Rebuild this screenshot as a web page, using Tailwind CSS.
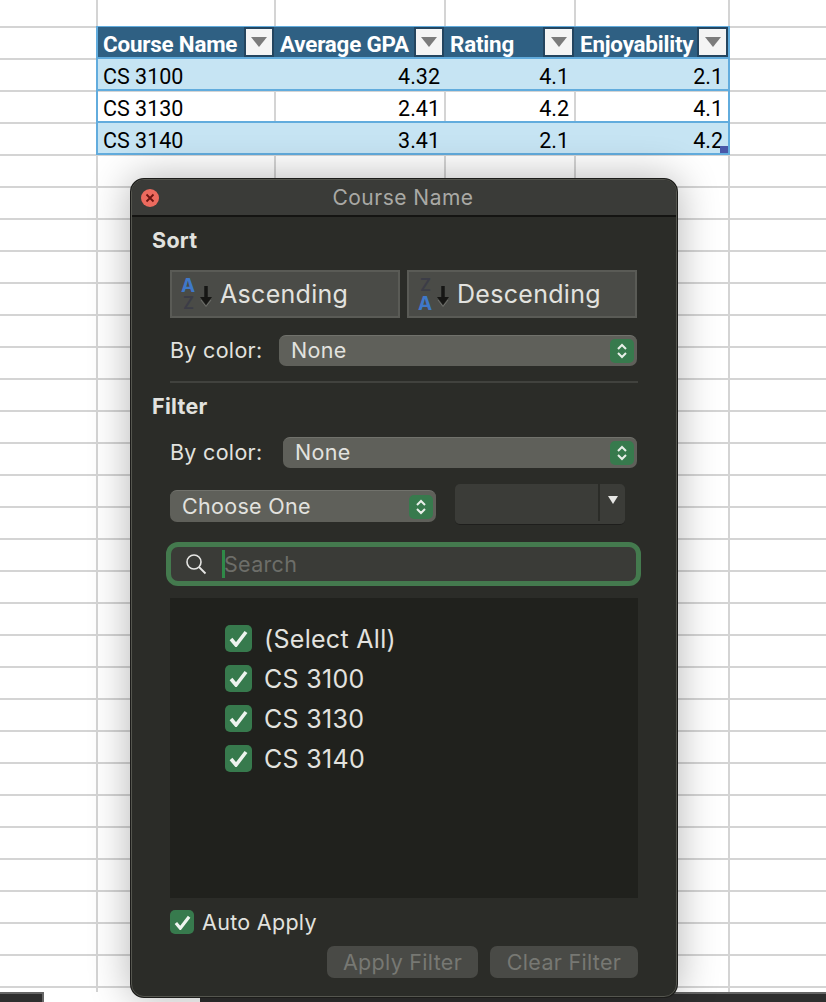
<!doctype html>
<html><head><meta charset="utf-8"><script src="https://cdn.jsdelivr.net/npm/@tailwindcss/browser@4"></script></head>
<body class="bg-white overflow-hidden">
<div class="relative w-[826px] h-[1002px] overflow-hidden font-['Inter',sans-serif]">
  <div class="h-[992px] pt-[26px] pl-[96px] bg-[linear-gradient(to_right,transparent_96px,#d4d4d4_96px,#d4d4d4_98px,transparent_98px,transparent_274px,#d4d4d4_274px,#d4d4d4_276px,transparent_276px,transparent_444px,#d4d4d4_444px,#d4d4d4_446px,transparent_446px,transparent_728px,#d4d4d4_728px,#d4d4d4_730px,transparent_730px),linear-gradient(to_right,transparent_574px,#d4d4d4_574px,#d4d4d4_576px,transparent_576px),repeating-linear-gradient(to_bottom,#d4d4d4_0,#d4d4d4_2px,transparent_2px,transparent_32px)] [background-position:0_0,0_0,0_26px] [background-size:100%_100%,100%_100%,100%_100%]">
    <div class="w-[634px] border-2 border-[#62acdd] text-black font-['Roboto',sans-serif] text-[21.5px]">
      <div class="flex h-[30px] bg-[#2f6083] text-white font-['Roboto',sans-serif] font-bold text-[22.4px] tracking-[-0.2px] -mt-px leading-[34px]">
        <div class="w-[176px] pl-[5px] flex justify-between"><span>Course Name</span><span class="w-[30px] h-[30px] border-2 border-[#24455f] bg-[#f4f4f4] flex items-center justify-center"><svg width="18" height="12" viewBox="0 0 18 12"><path d="M1 1h16l-8 10z" fill="#7b7b7b"/></svg></span></div>
        <div class="w-[170px] pl-[6px] flex justify-between"><span>Average GPA</span><span class="w-[30px] h-[30px] border-2 border-[#24455f] bg-[#f4f4f4] flex items-center justify-center"><svg width="18" height="12" viewBox="0 0 18 12"><path d="M1 1h16l-8 10z" fill="#7b7b7b"/></svg></span></div>
        <div class="w-[130px] pl-[6px] flex justify-between"><span>Rating</span><span class="w-[31px] h-[30px] border-2 border-[#24455f] bg-[#f4f4f4] flex items-center justify-center"><svg width="18" height="12" viewBox="0 0 18 12"><path d="M1 1h16l-8 10z" fill="#7b7b7b"/></svg></span></div>
        <div class="w-[154px] pl-[6px] flex justify-between"><span>Enjoyability</span><span class="w-[31px] h-[30px] border-2 border-[#24455f] bg-[#f4f4f4] flex items-center justify-center"><svg width="18" height="12" viewBox="0 0 18 12"><path d="M1 1h16l-8 10z" fill="#7b7b7b"/></svg></span></div>
      </div>
      <div class="flex h-[32px] leading-[35px] bg-[#c6e4f3] border-t-2 border-[#62acdd]">
        <div class="w-[176px] pl-[5px]">CS 3100</div><div class="w-[170px] text-right pr-[4px]">4.32</div><div class="w-[130px] text-right pr-[5px]">4.1</div><div class="w-[154px] text-right pr-[5px]">2.1</div>
      </div>
      <div class="flex h-[32px] leading-[35px] border-t-2 border-[#62acdd]">
        <div class="w-[176px] pl-[5px]">CS 3130</div><div class="w-[170px] text-right pr-[4px]">2.41</div><div class="w-[130px] text-right pr-[5px]">4.2</div><div class="w-[154px] text-right pr-[5px]">4.1</div>
      </div>
      <div class="relative flex h-[32px] leading-[35px] bg-[#c6e4f3] border-t-2 border-[#62acdd]">
        <div class="w-[176px] pl-[5px]">CS 3140</div><div class="w-[170px] text-right pr-[4px]">3.41</div><div class="w-[130px] text-right pr-[5px]">2.1</div><div class="w-[154px] text-right pr-[5px]">4.2</div>
        <div class="absolute right-0 bottom-0 w-[8px] h-[7px] bg-[#4a57a8]"></div>
      </div>
    </div>
  </div>
  <div class="flex h-[10px]">
    <div class="w-[44px] bg-[#2e2e2e] border-t-2 border-r-2 border-[#666]"></div>
    <div class="w-[156px] bg-white"></div>
    <div class="flex-1 bg-[#2e2e2e] border-t-2 border-[#666]"></div>
  </div>

  <div class="absolute left-[130px] top-[178px] w-[548px] h-[820px] rounded-[14px] bg-[#2b2c28] border-2 border-[#1c1c1a] outline outline-1 outline-[#55564f] -outline-offset-2 shadow-[0_0_40px_rgba(0,0,0,0.3)] text-[#e2e2df] text-[21.5px] tracking-[0.3px] overflow-hidden font-['Inter',sans-serif]">
    <div class="relative h-[37px] bg-[#3a3b38] border-b-2 border-[#141412] text-center text-[#a9a9a5] text-[21px] tracking-[0.5px] pr-[2px] leading-[35px]">
      <span class="absolute left-[9px] top-[9px] w-[18px] h-[18px] rounded-full bg-[#ec6a5e] flex items-center justify-center"><svg width="10" height="10" viewBox="0 0 10 10"><path d="M1.5 1.5l7 7M8.5 1.5l-7 7" stroke="#6b1410" stroke-width="1.8"/></svg></span>
      Course Name
    </div>
    <div class="pl-[20px] pt-[11px] font-bold text-[21.5px] leading-[24px]">Sort</div>
    <div class="flex gap-[7px] pl-[38px] mt-[18px]">
      <div class="w-[230px] h-[48px] bg-[#4a4b47] border-2 border-[#5a5b56] flex items-center pl-[9px] text-[25px] gap-[7px]">
        <svg class="shrink-0" width="34" height="44" viewBox="0 -3 34 44"><text x="0" y="17" font-family="Inter" font-weight="700" font-size="19" fill="#3f78c9">A</text><text x="2" y="34" font-family="Inter" font-weight="600" font-size="17" fill="#3c3d47">Z</text><path d="M25 11v13" stroke="#161614" stroke-width="3.5"/><path d="M19 22h12l-6 8z" fill="#161614"/><path d="M20 25l5 6.500 5-6.500" fill="none" stroke="#6f706b" stroke-width="1"/></svg>
        <span class="-ml-[2px] mt-[2px]">Ascending</span>
      </div>
      <div class="w-[230px] h-[48px] bg-[#4a4b47] border-2 border-[#5a5b56] flex items-center pl-[9px] text-[25px] gap-[7px]">
        <svg class="shrink-0" width="34" height="44" viewBox="0 -3 34 44"><text x="2" y="16" font-family="Inter" font-weight="600" font-size="17" fill="#3c3d47">Z</text><text x="0" y="35" font-family="Inter" font-weight="700" font-size="19" fill="#3f78c9">A</text><path d="M25 11v13" stroke="#161614" stroke-width="3.5"/><path d="M19 22h12l-6 8z" fill="#161614"/><path d="M20 25l5 6.500 5-6.500" fill="none" stroke="#6f706b" stroke-width="1"/></svg>
        <span class="-ml-[2px] mt-[2px]">Descending</span>
      </div>
    </div>
    <div class="flex items-center pl-[38px] mt-[17px] h-[31px] gap-[17px]">
      <span class="w-[92px] whitespace-nowrap">By color:</span>
      <div class="w-[358px] h-[31px] rounded-[7px] bg-[#5f605a] border-t border-[#71726c] pl-[12px] pr-[3px] flex items-center justify-between"><span class="pb-[2px]">None</span><span class="w-[24px] h-[24px] rounded-[5px] bg-[#377a4d] flex items-center justify-center"><svg width="12" height="18" viewBox="0 0 12 18"><path d="M2 7l4-4 4 4M2 11l4 4 4-4" fill="none" stroke="#e8efe9" stroke-width="2"/></svg></span></div>
    </div>
    <div class="ml-[38px] mr-[38px] mt-[15px] h-[2px] bg-[#41423e]"></div>
    <div class="pl-[20px] mt-[11px] font-bold text-[21.5px] leading-[24px]">Filter</div>
    <div class="flex items-center pl-[38px] mt-[19px] h-[31px] gap-[21px]">
      <span class="w-[92px] whitespace-nowrap">By color:</span>
      <div class="w-[354px] h-[31px] rounded-[7px] bg-[#5f605a] border-t border-[#71726c] pl-[12px] pr-[3px] flex items-center justify-between"><span class="pb-[2px]">None</span><span class="w-[24px] h-[24px] rounded-[5px] bg-[#377a4d] flex items-center justify-center"><svg width="12" height="18" viewBox="0 0 12 18"><path d="M2 7l4-4 4 4M2 11l4 4 4-4" fill="none" stroke="#e8efe9" stroke-width="2"/></svg></span></div>
    </div>
    <div class="flex items-center pl-[38px] mt-[16px] h-[41px] gap-[19px]">
      <div class="w-[266px] h-[32px] mt-[3px] rounded-[7px] bg-[#5f605a] border-t border-[#71726c] pl-[12px] pr-[3px] flex items-center justify-between"><span>Choose One</span><span class="w-[24px] h-[24px] rounded-[5px] bg-[#377a4d] flex items-center justify-center"><svg width="12" height="18" viewBox="0 0 12 18"><path d="M2 7l4-4 4 4M2 11l4 4 4-4" fill="none" stroke="#e8efe9" stroke-width="2"/></svg></span></div>
      <div class="w-[170px] h-[41px] rounded-[5px] bg-[#3b3c38] border-b border-[#1e1e1c] flex justify-end"><span class="w-[27px] h-[37px] border-l-2 border-[#2b2c28] flex items-center justify-center pb-[6px]"><svg width="10" height="8" viewBox="0 0 10 8"><path d="M0 0h10l-5 8z" fill="#e6e6e4"/></svg></span></div>
    </div>
    <div class="ml-[34px] mt-[17px] w-[475px] h-[44px] rounded-[12px] border-[5px] border-[#447a4e] bg-[#3a3b37] flex items-center pl-[14px]">
      <svg class="shrink-0" width="22" height="22" viewBox="0 0 22 22"><circle cx="9" cy="9" r="7" fill="none" stroke="#e6e6e4" stroke-width="1.6"/><path d="M14 14l6.500 6.500" stroke="#e6e6e4" stroke-width="1.8"/></svg>
      <span class="ml-[15px] w-[3px] h-[28px] bg-[#2f8a48] shrink-0"></span>
      <span class="-ml-[1px] text-[#6d6e69]">Search</span>
    </div>
    <div class="ml-[38px] mt-[12px] w-[468px] h-[300px] bg-[#20211d] pt-[27px] pl-[55px] flex flex-col gap-[13px] text-[25px]">
      <div class="flex items-center h-[27px] gap-[12px]"><span class="w-[27px] h-[27px] rounded-[5px] bg-[#377a4d] flex items-center justify-center"><svg width="19" height="17" viewBox="0 0 19 17"><path d="M2 9l5 6L17 2" fill="none" stroke="#eef4ef" stroke-width="3.6"/></svg></span><span class="mt-[2px]">(Select All)</span></div>
      <div class="flex items-center h-[27px] gap-[12px]"><span class="w-[27px] h-[27px] rounded-[5px] bg-[#377a4d] flex items-center justify-center"><svg width="19" height="17" viewBox="0 0 19 17"><path d="M2 9l5 6L17 2" fill="none" stroke="#eef4ef" stroke-width="3.6"/></svg></span><span class="mt-[2px]">CS 3100</span></div>
      <div class="flex items-center h-[27px] gap-[12px]"><span class="w-[27px] h-[27px] rounded-[5px] bg-[#377a4d] flex items-center justify-center"><svg width="19" height="17" viewBox="0 0 19 17"><path d="M2 9l5 6L17 2" fill="none" stroke="#eef4ef" stroke-width="3.6"/></svg></span><span class="mt-[2px]">CS 3130</span></div>
      <div class="flex items-center h-[27px] gap-[12px]"><span class="w-[27px] h-[27px] rounded-[5px] bg-[#377a4d] flex items-center justify-center"><svg width="19" height="17" viewBox="0 0 19 17"><path d="M2 9l5 6L17 2" fill="none" stroke="#eef4ef" stroke-width="3.6"/></svg></span><span class="mt-[2px]">CS 3140</span></div>
    </div>
    <div class="flex items-center ml-[38px] mt-[12px] h-[24px] gap-[8px]"><span class="w-[24px] h-[24px] rounded-[5px] bg-[#377a4d] flex items-center justify-center"><svg width="17" height="15" viewBox="0 0 19 17"><path d="M2 9l5 6L17 2" fill="none" stroke="#eef4ef" stroke-width="3.6"/></svg></span><span>Auto Apply</span></div>
    <div class="flex justify-end gap-[12px] mr-[38px] mt-[12px] text-[#777873]">
      <div class="w-[151px] h-[32px] rounded-[7px] bg-[#494a46] flex items-center justify-center">Apply Filter</div>
      <div class="w-[148px] h-[32px] rounded-[7px] bg-[#494a46] flex items-center justify-center">Clear Filter</div>
    </div>
  </div>
</div>
</body></html>
